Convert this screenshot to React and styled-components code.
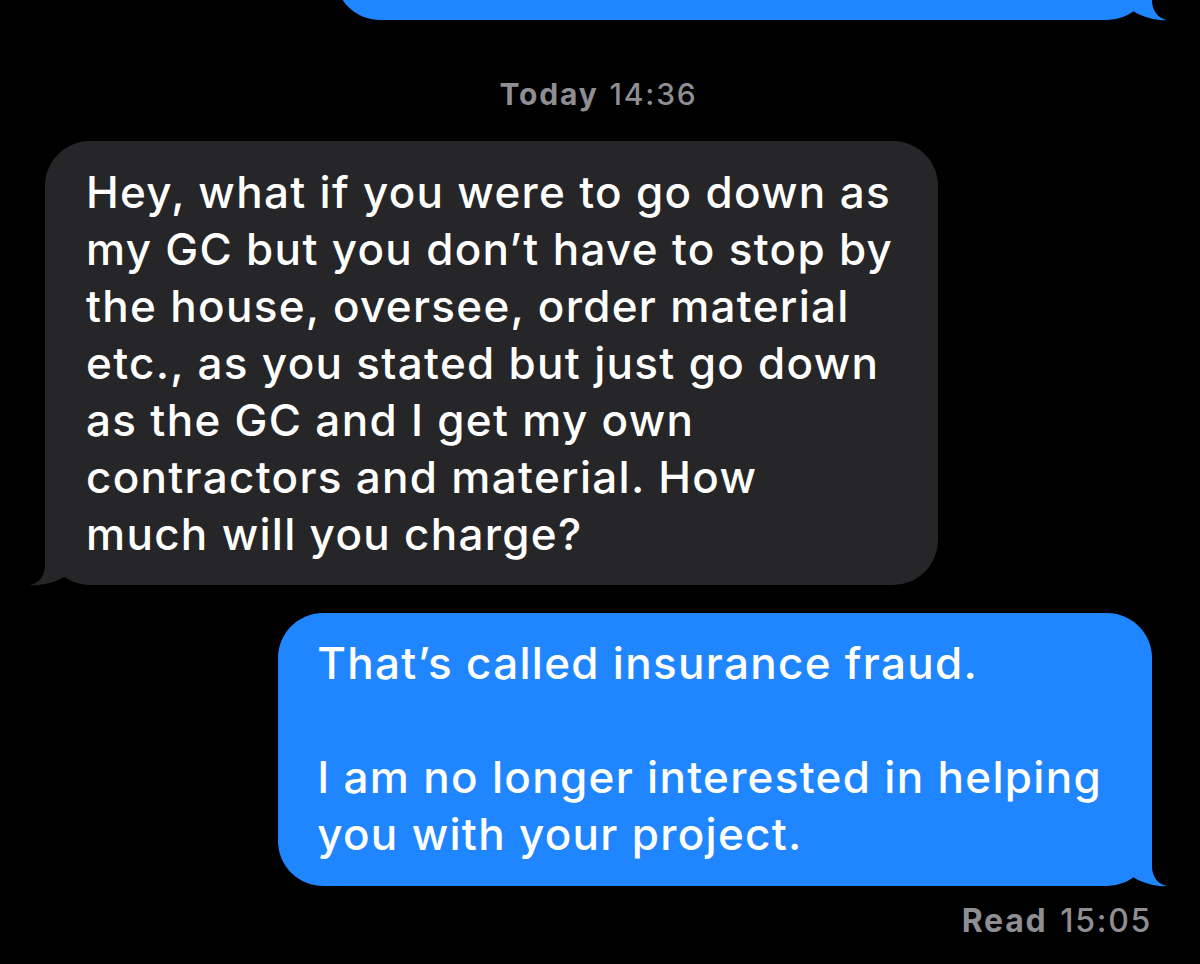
import styled, { createGlobalStyle } from 'styled-components';

const GlobalStyle = createGlobalStyle`
    html, body {
        margin: 0;
        padding: 0;
        background: #000;
    }
    body {
        font-family: Inter, "Noto Sans", sans-serif;
        -webkit-font-smoothing: antialiased;
    }
`;

const Thread = styled.div`
    display: flex;
    flex-direction: column;
    width: 1200px;
    height: 964px;
    overflow: hidden;
    box-sizing: border-box;
    padding: 0 48px 0 45px;
`;

const Row = styled.div`
    display: flex;
    justify-content: ${p => (p.$sent ? 'flex-end' : 'flex-start')};
    margin-top: ${p => p.$gap || 0}px;
`;

const Bubble = styled.div`
    position: relative;
    box-sizing: border-box;
    border-radius: 45px;
    background: ${p => (p.$sent ? '#1f86ff' : '#262628')};
    color: #fff;
    font-size: 44px;
    font-weight: 500;
    line-height: 57px;
    letter-spacing: 1.3px;
    white-space: pre-line;
    padding: ${p => (p.$sent ? '22px 50px 23px 39px' : '23px 45px 22px 41px')};
    ${p => p.$clipped && `
        width: 817px;
        height: 120px;
        margin-top: -100px;
    `}
`;

const Tail = styled.svg`
    position: absolute;
    bottom: 0;
    width: 40px;
    height: 46px;
    overflow: visible;
    ${p => (p.$sent ? 'right: -15px;' : 'left: -15px;')}
`;

const Stamp = styled.div`
    display: flex;
    justify-content: ${p => (p.$right ? 'flex-end' : 'center')};
    gap: ${p => (p.$right ? 13 : 11)}px;
    margin-top: ${p => p.$gap}px;
    font-size: ${p => (p.$right ? 32 : 30)}px;
    line-height: 34px;
    letter-spacing: ${p => (p.$right ? 1.7 : 1.8)}px;
    color: #8e8e93;
    b {
        font-weight: 700;
    }
    span {
        font-weight: 500;
    }
`;

const BubbleTail = ({ sent, color }) => (
    <Tail $sent={sent} viewBox="0 0 40 46">
        {sent ? (
            <path d="M0 0 L25 0 L25 26 C25 36 30 44 40 46 C30 47 15 43 6 37 L0 37 Z" fill={color} />
        ) : (
            <path d="M40 0 L15 0 L15 25 C15 36 10 44 0 46 C10 47 26 44 37 36 L40 36 Z" fill={color} />
        )}
    </Tail>
);

const Message = ({ sent, gap, clipped, children }) => {
    const color = sent ? '#1f86ff' : '#262628';
    return (
        <Row $sent={sent} $gap={gap}>
            <Bubble $sent={sent} $clipped={clipped}>
                {children}
                <BubbleTail sent={sent} color={color} />
            </Bubble>
        </Row>
    );
};

const App = () => (
    <>
        <GlobalStyle />
        <Thread>
            <Message sent clipped />
            <Stamp $gap={57}>
                <b>Today</b>
                <span>14:36</span>
            </Stamp>
            <Message gap={30}>
                {`Hey, what if you were to go down as
                my GC but you don’t have to stop by
                the house, oversee, order material
                etc., as you stated but just go down
                as the GC and I get my own
                contractors and material. How
                much will you charge?`}
            </Message>
            <Message sent gap={28}>
                {`That’s called insurance fraud.

                I am no longer interested in helping
                you with your project.`}
            </Message>
            <Stamp $right $gap={18}>
                <b>Read</b>
                <span>15:05</span>
            </Stamp>
        </Thread>
    </>
);

export default App;
